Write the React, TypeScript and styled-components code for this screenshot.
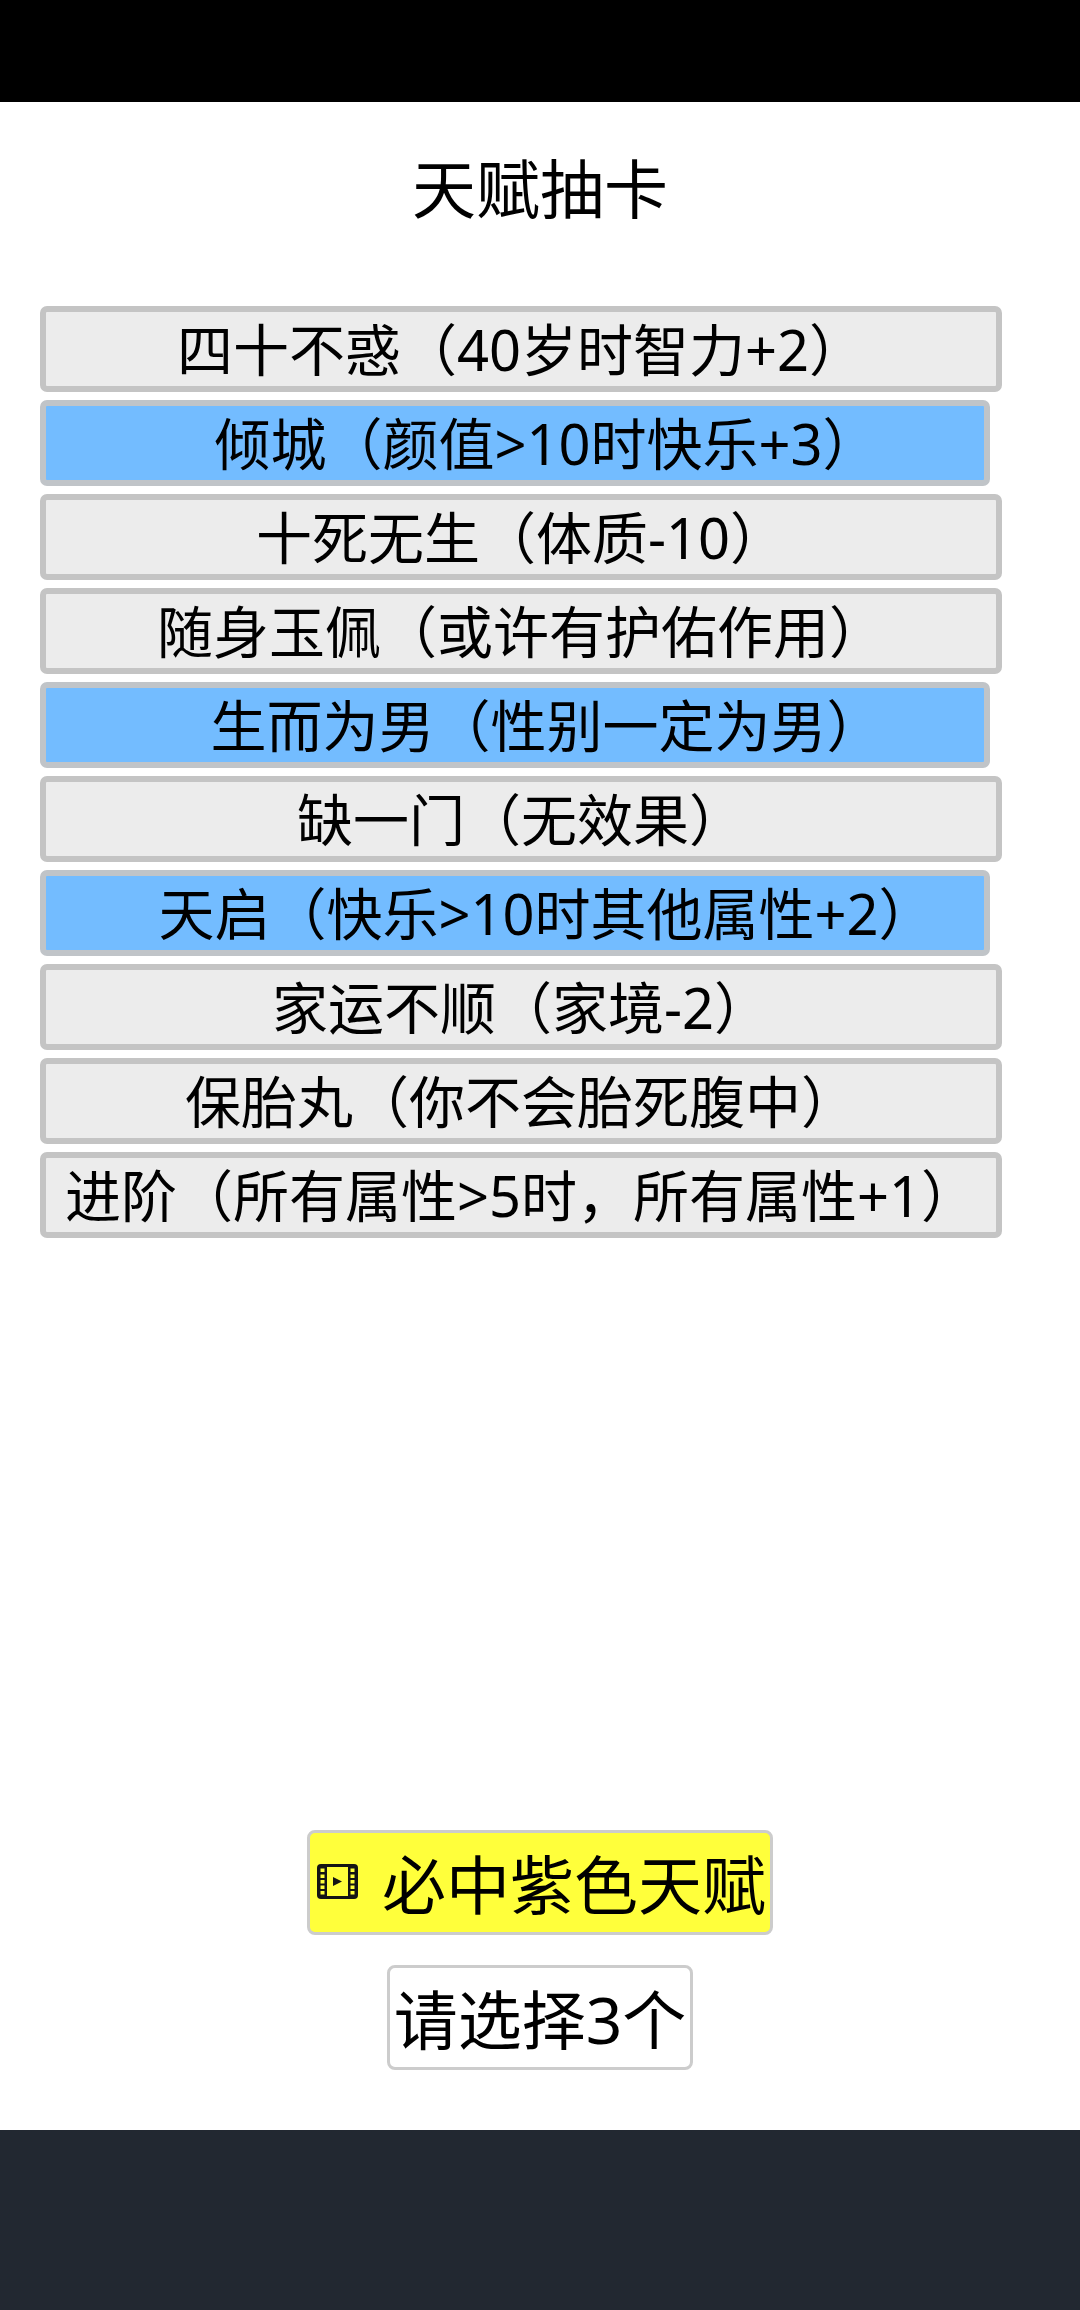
import styled, { createGlobalStyle } from "styled-components";

const GlobalStyle = createGlobalStyle`
  html, body {
    margin: 0;
    padding: 0;
    background: #fff;
  }
  body {
    font-family: "Noto Sans", "Noto Sans CJK SC", sans-serif;
    color: #000;
  }
`;

const Page = styled.div`
  display: flex;
  flex-direction: column;
  width: 1080px;
  height: 2310px;
  overflow: hidden;
`;

const StatusBar = styled.div`
  height: 102px;
  flex-shrink: 0;
  background: #000;
`;

const Content = styled.main`
  flex: 1;
  display: flex;
  flex-direction: column;
  background: #fff;
`;

const Title = styled.h1`
  margin: 0;
  padding-top: 48px;
  height: 154px;
  box-sizing: border-box;
  font-size: 64px;
  line-height: 78px;
  font-weight: 400;
  text-align: center;
`;

const TalentList = styled.div`
  display: flex;
  flex-direction: column;
  align-items: flex-start;
  gap: 8px;
  margin-top: 50px;
  padding-left: 40px;
`;

const Talent = styled.div<{ $selected?: boolean }>`
  box-sizing: border-box;
  width: ${(p) => (p.$selected ? "950px" : "962px")};
  height: 86px;
  display: flex;
  align-items: center;
  justify-content: center;
  padding-left: ${(p) => (p.$selected ? "63px" : "0")};
  padding-bottom: 6px;
  border: 6px solid ${(p) => (p.$selected ? "#c0c4c8" : "#c4c4c4")};
  border-radius: 7px;
  background: ${(p) => (p.$selected ? "#73bcff" : "#ececec")};
  font-size: 56px;
  white-space: nowrap;
`;

const Actions = styled.div`
  margin-top: auto;
  padding-bottom: 60px;
  display: flex;
  flex-direction: column;
  align-items: center;
  gap: 30px;
`;

const ActionButton = styled.div<{ $ad?: boolean }>`
  box-sizing: border-box;
  height: 105px;
  display: flex;
  align-items: center;
  padding: 0 4px 2px;
  border: 3px solid #cccccc;
  border-radius: 8px;
  background: ${(p) => (p.$ad ? "#ffff3b" : "#fff")};
  font-size: 64px;
  white-space: nowrap;
`;

const FilmIcon = styled.svg`
  width: 41px;
  height: 35px;
  margin: 0 24px 0 3px;
  flex-shrink: 0;
`;

const Footer = styled.div`
  height: 180px;
  flex-shrink: 0;
  background: #222831;
`;

const talents = [
  { name: "四十不惑（40岁时智力+2）" },
  { name: "倾城（颜值>10时快乐+3）", selected: true },
  { name: "十死无生（体质-10）" },
  { name: "随身玉佩（或许有护佑作用）" },
  { name: "生而为男（性别一定为男）", selected: true },
  { name: "缺一门（无效果）" },
  { name: "天启（快乐>10时其他属性+2）", selected: true },
  { name: "家运不顺（家境-2）" },
  { name: "保胎丸（你不会胎死腹中）" },
  { name: "进阶（所有属性>5时，所有属性+1）" },
];

const holes = [4.5, 10.5, 16, 21.5, 27];

export default function App() {
  return (
    <Page>
      <GlobalStyle />
      <StatusBar />
      <Content>
        <Title>天赋抽卡</Title>
        <TalentList>
          {talents.map((t) => (
            <Talent key={t.name} $selected={t.selected}>
              {t.name}
            </Talent>
          ))}
        </TalentList>
        <Actions>
          <ActionButton $ad>
            <FilmIcon viewBox="0 0 41 35">
              <rect width="41" height="35" rx="4" fill="#141414" />
              <rect x="10" y="3" width="21" height="29" fill="#ffff3b" />
              {holes.map((y) => (
                <g key={y} fill="#ffff3b">
                  <rect x="3.5" y={y} width="4" height="3.5" />
                  <rect x="33.5" y={y} width="4" height="3.5" />
                </g>
              ))}
              <path d="M16 13l9 4.5-9 4.5z" fill="#141414" />
            </FilmIcon>
            必中紫色天赋
          </ActionButton>
          <ActionButton>请选择3个</ActionButton>
        </Actions>
      </Content>
      <Footer />
    </Page>
  );
}
